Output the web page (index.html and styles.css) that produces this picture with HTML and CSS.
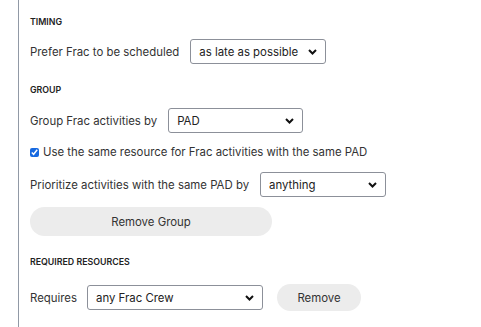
FILE: index.html
```html
<!DOCTYPE html>
<html lang="en">
<head>
  <meta charset="UTF-8">
  <meta name="viewport" content="width=device-width, initial-scale=1.0">
  <title>Frac Settings</title>
  <link rel="stylesheet" href="styles.css">
</head>
<body>
  <div class="panel">
    <!-- Timing -->
    <h3 class="section-title title-timing">TIMING</h3>
    <div class="row row-prefer">
      <label for="timing">Prefer Frac to be scheduled</label>
      <select id="timing" class="select select-timing">
        <option>as late as possible</option>
      </select>
    </div>

    <!-- Group -->
    <h3 class="section-title title-group">GROUP</h3>
    <div class="row row-group">
      <label for="group">Group Frac activities by</label>
      <select id="group" class="select select-group">
        <option>PAD</option>
      </select>
    </div>
    <div class="row row-check">
      <input type="checkbox" id="same" checked>
      <label for="same">Use the same resource for Frac activities with the same PAD</label>
    </div>
    <div class="row row-priority">
      <label for="priority">Prioritize activities with the same PAD by</label>
      <select id="priority" class="select select-priority">
        <option>anything</option>
      </select>
    </div>
    <button class="btn btn-wide">Remove Group</button>

    <!-- Required resources -->
    <h3 class="section-title title-required">REQUIRED RESOURCES</h3>
    <div class="row row-requires">
      <label for="requires">Requires</label>
      <select id="requires" class="select select-requires">
        <option>any Frac Crew</option>
      </select>
      <button class="btn btn-remove">Remove</button>
    </div>
  </div>
</body>
</html>
```

FILE: styles.css
```css
body {
  font-family: Inter, "Noto Sans", sans-serif;
  margin: 0;
  padding: 0;
  background: #fff;
  color: #333;
  font-size: 11.4px;
}

.panel {
  margin-left: 18px;
  border-left: 1px solid #9199a6;
  padding: 17px 0 20px 11px;
  min-height: 300px;
  display: flex;
  flex-direction: column;
  align-items: flex-start;
}

.section-title {
  margin: 0;
  font-size: 8.8px;
  font-weight: 600;
  line-height: 10px;
  color: #222;
  letter-spacing: 0;
}

.title-group { margin-top: 21px; }
.title-required { margin-top: 21px; }

.row {
  display: flex;
  align-items: center;
}

.row label {
  color: #333;
  line-height: 14px;
}

.row-prefer { margin-top: 12px; gap: 11px; }
.row-group { margin-top: 13px; gap: 11px; }
.row-check { margin-top: 11px; gap: 4px; height: 16px; }
.row-priority { margin-top: 12px; gap: 11px; }
.row-requires { margin-top: 17px; gap: 10px; }

.select {
  appearance: none;
  -webkit-appearance: none;
  height: 25px;
  border: 1px solid #8c9099;
  border-radius: 3px;
  background-color: #fff;
  background-image: url("data:image/svg+xml,%3Csvg xmlns='http://www.w3.org/2000/svg' width='9' height='6' viewBox='0 0 9 6'%3E%3Cpath d='M1 1l3.5 3.5L8 1' fill='none' stroke='%23111' stroke-width='2'/%3E%3C/svg%3E");
  background-repeat: no-repeat;
  background-position: right 8px center;
  font-family: inherit;
  font-size: 11.4px;
  color: #222;
  padding: 0 20px 0 8px;
  margin: 0;
}

.select-timing { width: 136px; }
.select-group { width: 135px; }
.select-priority { width: 126px; }
.select-requires { width: 176px; }

.row-check input {
  width: 9px;
  height: 9px;
  margin: 0;
  accent-color: #1769e0;
}

.btn {
  border: none;
  background: #ececec;
  border-radius: 15px;
  font-family: inherit;
  font-size: 11.4px;
  color: #333;
  cursor: pointer;
}

.btn-wide {
  margin-top: 10px;
  width: 242px;
  height: 29px;
}

.btn-remove {
  margin-left: 4px;
  width: 84px;
  height: 27px;
}
```
